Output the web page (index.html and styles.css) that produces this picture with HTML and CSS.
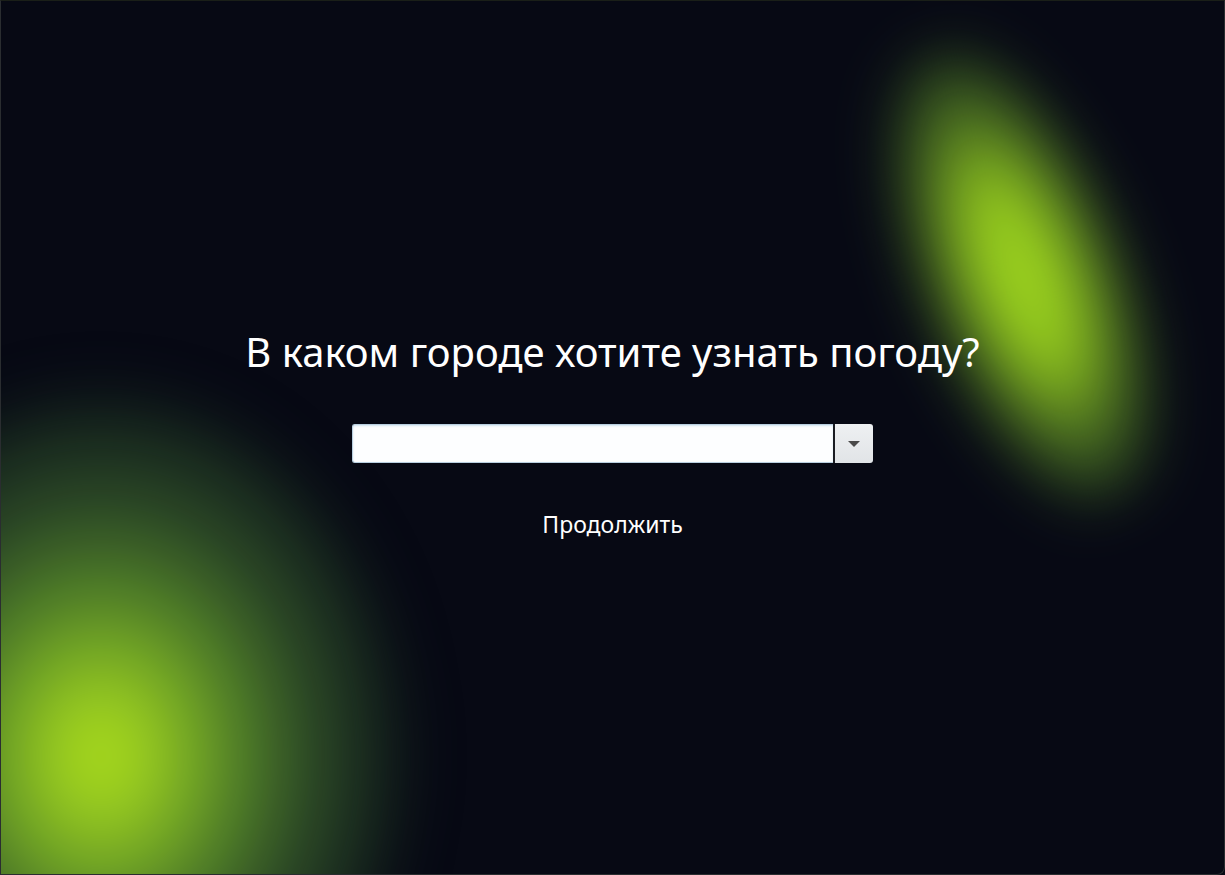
FILE: index.html
```html
<!DOCTYPE html>
<html lang="ru">
<head>
<meta charset="utf-8">
<title>Погода</title>
<link rel="stylesheet" href="styles.css">
</head>
<body>
<div class="window">
  <div class="glow glow-top"></div>
  <div class="glow glow-bottom"></div>
  <main class="content">
    <h1 class="title">В каком городе хотите узнать погоду?</h1>
    <div class="combo">
      <div class="combo-field"></div>
      <div class="combo-button">
        <svg width="14" height="8" viewBox="0 0 14 8"><path d="M1 1 L13 1 L7 7 Z" fill="#4a4a4a"/></svg>
      </div>
    </div>
    <button class="continue" type="button">Продолжить</button>
  </main>
</div>
</body>
</html>
```
FILE: styles.css
```css
html, body {
  margin: 0;
  padding: 0;
  height: 100%;
  background: #070914;
}
body {
  font-family: "Noto Sans", "Open Sans", "DejaVu Sans", sans-serif;
}
.window {
  position: relative;
  box-sizing: border-box;
  width: 1225px;
  height: 875px;
  overflow: hidden;
  background: #070914;
  border: 1px solid #2a2d30;
  border-top-color: #1a1f18;
  border-radius: 0 0 8px 0;
}
.glow {
  position: absolute;
  pointer-events: none;
}
.glow-top {
  left: 922px;
  top: 35px;
  width: 200px;
  height: 480px;
  border-radius: 50%;
  background: radial-gradient(ellipse at center, rgba(165,220,30,1) 0%, rgba(150,205,30,0.95) 28%, rgba(85,135,40,0.6) 58%, rgba(30,50,30,0.15) 85%, rgba(30,50,30,0) 100%);
  transform: rotate(-22deg);
  filter: blur(28px);
}
.glow-bottom {
  left: -200px;
  top: 395px;
  width: 600px;
  height: 720px;
  border-radius: 50%;
  background: radial-gradient(ellipse at center, rgba(180,228,25,1) 0%, rgba(150,205,35,0.95) 14%, rgba(100,160,45,0.8) 32%, rgba(65,110,50,0.6) 50%, rgba(35,65,40,0.35) 70%, rgba(15,30,25,0.1) 88%, rgba(10,20,20,0) 100%);
  filter: blur(30px);
}
.content {
  position: relative;
  display: flex;
  flex-direction: column;
  align-items: center;
  padding-top: 324px;
}
.title {
  margin: 0;
  font-weight: 400;
  font-size: 40px;
  line-height: 54px;
  color: #ffffff;
}
.combo {
  margin-top: 45px;
  display: flex;
  width: 521px;
  height: 39px;
}
.combo-field {
  flex: 1;
  background: #fdfeff;
  border: 1px solid #b9cfe0;
  border-right: none;
  border-radius: 3px 0 0 3px;
  box-shadow: inset 0 1px 2px rgba(180,210,230,0.6);
}
.combo-button {
  width: 38px;
  display: flex;
  align-items: center;
  justify-content: center;
  background: linear-gradient(#eef0f2, #e1e4e7);
  border-left: 2px solid #1a1c22;
  border-radius: 0 3px 3px 0;
}
.continue {
  margin-top: 46px;
  background: none;
  border: none;
  padding: 0;
  font-family: inherit;
  font-size: 23px;
  line-height: 30px;
  color: #ffffff;
  cursor: pointer;
}
```
